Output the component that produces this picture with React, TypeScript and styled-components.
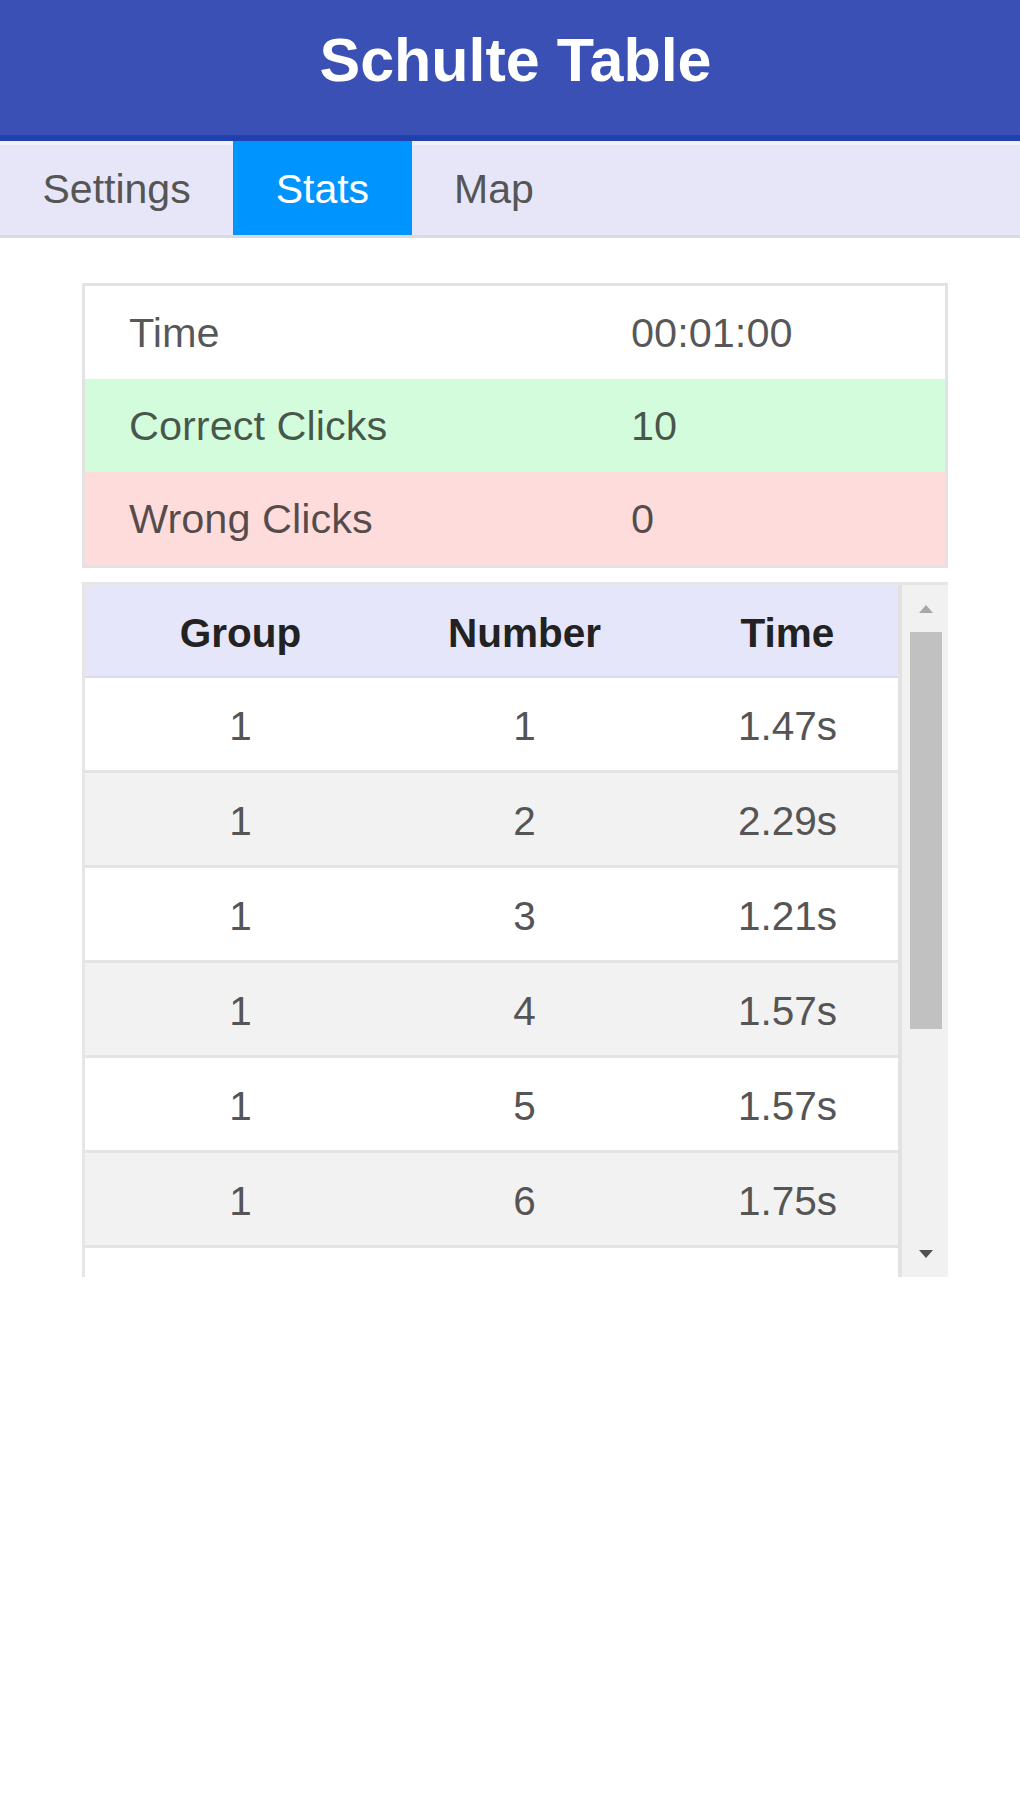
import React from "react";
import styled, { createGlobalStyle } from "styled-components";

const GlobalStyle = createGlobalStyle`
  html, body {
    margin: 0;
    padding: 0;
    background: #ffffff;
  }
  body {
    font-family: "Liberation Sans", Arial, sans-serif;
  }
  * { box-sizing: border-box; }
`;

const Page = styled.div`
  width: 1020px;
  min-height: 1817px;
  background: #ffffff;
`;

const Header = styled.header`
  height: 141px;
  padding: 25px 0 0 11px;
  background: #3a50b4;
  border-bottom: 6px solid #2140b0;
  display: flex;
  justify-content: center;
  align-items: flex-start;
`;

const Title = styled.h1`
  margin: 0;
  font-size: 61px;
  line-height: 70px;
  font-weight: 700;
  color: #ffffff;
`;

const TabBar = styled.nav`
  display: flex;
  height: 97px;
  background: #e6e6f8;
  box-shadow: inset 0 4px 0 #f1f1fb;
  border-bottom: 3px solid #d9d9e2;
`;

const Tab = styled.div<{ $active?: boolean }>`
  height: 94px;
  padding: 0 42.5px;
  font-size: 41px;
  line-height: 96px;
  color: ${(p) => (p.$active ? "#ffffff" : "#555555")};
  background: ${(p) => (p.$active ? "#0094ff" : "transparent")};
`;

const Content = styled.main`
  padding: 45px 72px 0 82px;
  display: flex;
  flex-direction: column;
  gap: 14px;
`;

const StatsBox = styled.div`
  border: 3px solid #e3e3e3;
  display: flex;
  flex-direction: column;
`;

const StatRow = styled.div<{ $tone: "plain" | "good" | "bad" }>`
  height: 93px;
  display: grid;
  grid-template-columns: 502px 1fr;
  align-items: center;
  padding-left: 44px;
  font-size: 41.5px;
  color: rgba(0, 0, 0, 0.66);
  background: ${(p) =>
    p.$tone === "good" ? "#d2fcdc" : p.$tone === "bad" ? "#fddcdb" : "#ffffff"};
`;

const Scroller = styled.div`
  height: 695px;
  display: flex;
  border-top: 3px solid #e6e6e6;
  border-left: 3px solid #e6e6e6;
`;

const Viewport = styled.div`
  flex: 1;
  overflow: hidden;
  border-right: 4px solid #e2e2e2;
`;

const GridRow = styled.div<{ $kind: "head" | "odd" | "even" }>`
  display: grid;
  grid-template-columns: 311px 257px 1fr;
  align-items: center;
  height: ${(p) => (p.$kind === "head" ? "93px" : "95px")};
  padding-top: 5px;
  font-size: 40.5px;
  font-weight: ${(p) => (p.$kind === "head" ? 700 : 400)};
  color: ${(p) => (p.$kind === "head" ? "#222222" : "#555555")};
  background: ${(p) =>
    p.$kind === "head" ? "#e6e6fa" : p.$kind === "even" ? "#f2f2f2" : "#ffffff"};
  border-bottom: ${(p) => (p.$kind === "head" ? "2px solid #dcdcec" : "3px solid #e4e4e4")};
`;

const Cell = styled.div<{ $shift?: boolean }>`
  text-align: center;
  padding-left: ${(p) => (p.$shift ? "24px" : "0")};
`;

const Track = styled.div`
  width: 46px;
  background: #f1f1f1;
  display: flex;
  flex-direction: column;
  align-items: stretch;
`;

const ArrowButton = styled.div`
  height: 47px;
  display: flex;
  align-items: center;
  justify-content: center;
  padding-left: 2px;
`;

const Thumb = styled.div`
  height: 397px;
  margin: 0 6px 0 8px;
  background: #c1c1c1;
`;

const TrackRest = styled.div`
  flex: 1;
`;

const Arrow = ({ up, color }: { up?: boolean; color: string }) => (
  <svg width="14" height="8" viewBox="0 0 14 8">
    <polygon points={up ? "0,8 14,8 7,0" : "0,0 14,0 7,8"} fill={color} />
  </svg>
);

const clicks = [
  { g: 1, n: 1, t: "1.47s" },
  { g: 1, n: 2, t: "2.29s" },
  { g: 1, n: 3, t: "1.21s" },
  { g: 1, n: 4, t: "1.57s" },
  { g: 1, n: 5, t: "1.57s" },
  { g: 1, n: 6, t: "1.75s" },
  { g: 1, n: 7, t: "1.38s" },
  { g: 1, n: 8, t: "1.92s" },
  { g: 1, n: 9, t: "1.64s" },
  { g: 1, n: 10, t: "1.49s" },
];

export default function App() {
  return (
    <Page>
      <GlobalStyle />
      <Header>
        <Title>Schulte Table</Title>
      </Header>
      <TabBar>
        <Tab>Settings</Tab>
        <Tab $active>Stats</Tab>
        <Tab>Map</Tab>
      </TabBar>
      <Content>
        <StatsBox>
          <StatRow $tone="plain">
            <span>Time</span>
            <span>00:01:00</span>
          </StatRow>
          <StatRow $tone="good">
            <span>Correct Clicks</span>
            <span>10</span>
          </StatRow>
          <StatRow $tone="bad">
            <span>Wrong Clicks</span>
            <span>0</span>
          </StatRow>
        </StatsBox>
        <Scroller>
          <Viewport>
            <GridRow $kind="head">
              <Cell>Group</Cell>
              <Cell>Number</Cell>
              <Cell $shift>Time</Cell>
            </GridRow>
            {clicks.map((c, i) => (
              <GridRow key={c.n} $kind={i % 2 === 0 ? "odd" : "even"}>
                <Cell>{c.g}</Cell>
                <Cell>{c.n}</Cell>
                <Cell $shift>{c.t}</Cell>
              </GridRow>
            ))}
          </Viewport>
          <Track>
            <ArrowButton>
              <Arrow up color="#a8a8a8" />
            </ArrowButton>
            <Thumb />
            <TrackRest />
            <ArrowButton>
              <Arrow color="#505050" />
            </ArrowButton>
          </Track>
        </Scroller>
      </Content>
    </Page>
  );
}
